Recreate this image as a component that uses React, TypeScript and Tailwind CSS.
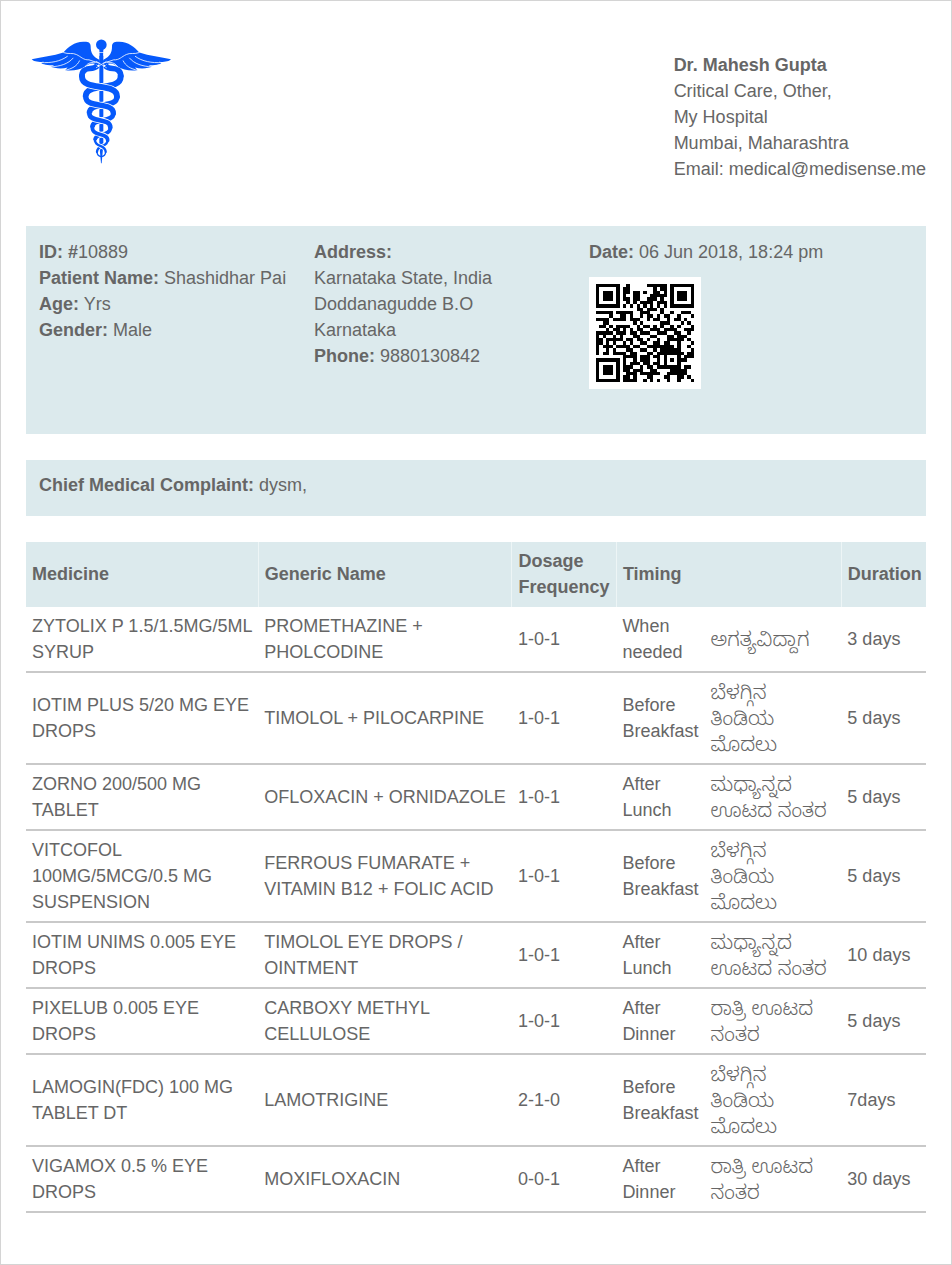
import React from "react";

const QR_ROWS = [
  "11111110010000011111101111111",
  "10000010110000000101101000001",
  "10111010110110100110101011101",
  "10111010100110001111101011101",
  "10111010110110011101001011101",
  "10000010010101111011101000001",
  "11111110101010101010101111111",
  "00000000000011011101000000000",
  "11111011111001110001001001110",
  "00001001101001011010110010001",
  "11110111101110010110010110100",
  "00110000000101000001110001010",
  "01101011110010110101001010001",
  "00010110101011001110111100111",
  "11111011101101110011100110010",
  "10100101000110001100011011100",
  "11011111011011010010011111010",
  "11010100101001100110110010001",
  "10111011110110011111111010010",
  "10010100011001100101111110001",
  "10110111101100011011111111011",
  "00000000111101110110100010111",
  "11111110100101110010101011100",
  "10000010101110110110100010000",
  "10111010111001011011111110110",
  "10111010110111001100001111100",
  "10111010011101111110011111100",
  "10000010110100011000110011010",
  "11111110111100101010010010001",
];

function QrCode() {
  return (
    <svg viewBox="-2 -2 33 33" className="size-28 bg-white" shapeRendering="crispEdges" role="img" aria-label="QR code">
      {QR_ROWS.map((row, y) =>
        Array.from(row.matchAll(/1+/g)).map((run) => (
          <rect key={`${y}-${run.index}`} x={run.index} y={y} width={run[0].length} height={1} fill="#000" />
        )),
      )}
    </svg>
  );
}

const LOBES = [
  { y: 140, a: 58 },
  { y: 200, a: 47 },
  { y: 250, a: 36 },
  { y: 293, a: 27 },
  { y: 331, a: 19 },
  { y: 366, a: 13 },
];
const COIL_WIDTHS = [18, 16, 14, 11, 7];
const CROSSINGS = [171, 226, 271, 314, 348];

function coil(i: number, side: number) {
  const from = LOBES[i];
  const to = LOBES[i + 1];
  const c = CROSSINGS[i];
  const bend = from.a / 4;
  const x0 = 244 + side * from.a;
  const x1 = 244 - side * to.a;
  return `M${x0} ${from.y}C${x0} ${c + bend} ${x1} ${c - bend} ${x1} ${to.y}`;
}

function Wing() {
  return (
    <g>
      <path
        fill="#0659fb"
        d="M35 88C65 82 100 78 130 68C145 52 162 37 190 36C204 35 212 38 212 50C212 68 218 80 238 90L241 102L232 106C215 96 205 104 195 110C180 119 158 125 135 121L143 113C122 119 100 114 92 111L103 106C80 107 62 102 64 98L72 96C55 97 40 94 35 88Z"
      />
      <path
        fill="none"
        stroke="#fff"
        strokeWidth="2.4"
        d="M130 68C145 74 158 68 169 74C184 81 190 91 207 90L240 101M62 98C93 100 121 95 143 79M91 111C121 110 145 102 160 84M132 122C158 117 171 108 179 92M195 112C200 102 210 97 227 97"
      />
    </g>
  );
}

function Caduceus() {
  return (
    <svg viewBox="30 26 426 381" className="h-32 w-[142px]" role="img" aria-label="Caduceus">
      <path d="M238 78H250V345L245 400H243L238 345Z" fill="#0659fb" />
      {[1, -1].map((side) => (
        <g key={side} fill="none">
          {COIL_WIDTHS.map((w, i) => (
            <path key={w} d={coil(i, side)} stroke="#fff" strokeWidth={w + 5} />
          ))}
          {COIL_WIDTHS.map((w, i) => (
            <path key={w} d={coil(i, side)} stroke="#0659fb" strokeWidth={w} strokeLinecap="round" />
          ))}
        </g>
      ))}
      <path
        fill="none"
        stroke="#0659fb"
        strokeWidth="17"
        d="M186 141C184 124 196 116 210 116C220 116 226 114 232 108M302 141C304 124 292 116 278 116C268 116 262 114 256 108"
      />
      <path fill="none" stroke="#0659fb" strokeWidth="4" d="M231 366C232 385 256 385 257 366" />
      <Wing />
      <g transform="matrix(-1 0 0 1 488 0)">
        <Wing />
      </g>
      <path d="M238 58H250L248 112H240Z" fill="#0659fb" />
      <path d="M228 94L260 114M260 94L228 114M236 68H252" stroke="#fff" strokeWidth="2" />
      <circle cx="244" cy="45" r="16" fill="#0659fb" />
    </svg>
  );
}

const MORNING = "ಬೆಳಗ್ಗಿನ ತಿಂಡಿಯ ಮೊದಲು";
const AFTERNOON = "ಮಧ್ಯಾನ್ನದ ಊಟದ ನಂತರ";
const NIGHT = "ರಾತ್ರಿ ಊಟದ ನಂತರ";

const MEDICINES = [
  ["ZYTOLIX P 1.5/1.5MG/5ML SYRUP", "PROMETHAZINE + PHOLCODINE", "1-0-1", "When needed", "ಅಗತ್ಯವಿದ್ದಾಗ", "3 days"],
  ["IOTIM PLUS 5/20 MG EYE DROPS", "TIMOLOL + PILOCARPINE", "1-0-1", "Before Breakfast", MORNING, "5 days"],
  ["ZORNO 200/500 MG TABLET", "OFLOXACIN + ORNIDAZOLE", "1-0-1", "After Lunch", AFTERNOON, "5 days"],
  ["VITCOFOL 100MG/5MCG/0.5 MG SUSPENSION", "FERROUS FUMARATE + VITAMIN B12 + FOLIC ACID", "1-0-1", "Before Breakfast", MORNING, "5 days"],
  ["IOTIM UNIMS 0.005 EYE DROPS", "TIMOLOL EYE DROPS / OINTMENT", "1-0-1", "After Lunch", AFTERNOON, "10 days"],
  ["PIXELUB 0.005 EYE DROPS", "CARBOXY METHYL CELLULOSE", "1-0-1", "After Dinner", NIGHT, "5 days"],
  ["LAMOGIN(FDC) 100 MG TABLET DT", "LAMOTRIGINE", "2-1-0", "Before Breakfast", MORNING, "7days"],
  ["VIGAMOX 0.5 % EYE DROPS", "MOXIFLOXACIN", "0-0-1", "After Dinner", NIGHT, "30 days"],
];

export default function App() {
  return (
    <main className="min-h-screen border border-[#d4d4d4] bg-white px-[25px] pt-[37px] pb-12 font-['Liberation_Sans','Noto_Sans_Kannada','Noto_Sans',sans-serif] text-[18px] leading-[26px] text-[#666]">
      <header className="flex items-start justify-between pl-1">
        <Caduceus />
        <address className="pt-[14px] not-italic">
          <strong>Dr. Mahesh Gupta</strong>
          <p>Critical Care, Other,</p>
          <p>My Hospital</p>
          <p>Mumbai, Maharashtra</p>
          <p>Email: medical@medisense.me</p>
        </address>
      </header>

      <section className="mt-11 grid min-h-52 grid-cols-[275fr_275fr_324fr] bg-[#dceaed] p-[13px]">
        <div>
          <p><strong>ID: #</strong>10889</p>
          <p><strong>Patient Name:</strong> Shashidhar Pai</p>
          <p><strong>Age:</strong> Yrs</p>
          <p><strong>Gender:</strong> Male</p>
        </div>
        <div>
          <p><strong>Address:</strong></p>
          <p>Karnataka State, India</p>
          <p>Doddanagudde B.O</p>
          <p>Karnataka</p>
          <p><strong>Phone:</strong> 9880130842</p>
        </div>
        <div>
          <p className="mb-3"><strong>Date:</strong> 06 Jun 2018, 18:24 pm</p>
          <QrCode />
        </div>
      </section>

      <section className="mt-[26px] bg-[#dceaed] px-[13px] pt-3 pb-[18px]">
        <p><strong>Chief Medical Complaint:</strong> dysm,</p>
      </section>

      <table className="mt-[26px] w-full table-fixed border-collapse text-left">
        <colgroup>
          <col className="w-[25.8%]" />
          <col className="w-[28.2%]" />
          <col className="w-[11.6%]" />
          <col className="w-[9.8%]" />
          <col className="w-[15.2%]" />
          <col className="w-[9.4%]" />
        </colgroup>
        <thead>
          <tr className="border-b border-[#dceaed] bg-[#dceaed] *:border-l *:border-l-[#edf5f6] *:px-1.5 *:py-1.5 *:first:border-l-0">
            <th scope="col">Medicine</th>
            <th scope="col">Generic Name</th>
            <th scope="col">Dosage Frequency</th>
            <th scope="col" colSpan={2}>Timing</th>
            <th scope="col">Duration</th>
          </tr>
        </thead>
        <tbody>
          {MEDICINES.map((cells) => (
            <tr key={cells[0]} className="border-b-2 border-[#c9c9c9]">
              {cells.map((cell, i) => (
                <td
                  key={i}
                  lang={i === 4 ? "kn" : undefined}
                  className={i === 4 ? "px-1.5 pt-1.5 pb-1.5 text-[20px] font-light" : "px-1.5 pt-1.5 pb-1.5"}
                >
                  {cell}
                </td>
              ))}
            </tr>
          ))}
        </tbody>
      </table>
    </main>
  );
}
